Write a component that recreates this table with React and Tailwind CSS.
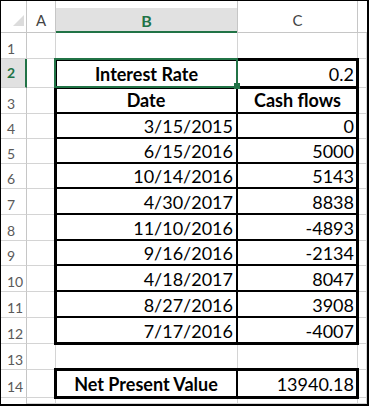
import React from "react";

const ROWS = ["row-start-1","row-start-2","row-start-3","row-start-4","row-start-5","row-start-6","row-start-7","row-start-8","row-start-9","row-start-10","row-start-11","row-start-12","row-start-13","row-start-14","row-start-15","row-start-16"];
const COLS = ["col-start-1","col-start-2","col-start-3","col-start-4","col-start-5"];

const data = [
  ["3/15/2015", "0"],
  ["6/15/2016", "5000"],
  ["10/14/2016", "5143"],
  ["4/30/2017", "8838"],
  ["11/10/2016", "-4893"],
  ["9/16/2016", "-2134"],
  ["4/18/2017", "8047"],
  ["8/27/2016", "3908"],
  ["7/17/2016", "-4007"],
];

const GRID = "border-r border-b border-[#d4d4d4]";

function cellContent(r, c) {
  if (r === 2 && c === 2) return { text: "Interest Rate", bold: true, align: "center", pb: "pb-[4px]" };
  if (r === 2 && c === 3) return { text: "0.2", align: "right", pb: "pb-[4px]" };
  if (r === 3 && c === 2) return { text: "Date", bold: true, align: "center", pb: "pb-[3px]" };
  if (r === 3 && c === 3) return { text: "Cash flows", bold: true, align: "center", pb: "pb-[3px]" };
  if (r >= 4 && r <= 12 && (c === 2 || c === 3)) {
    return { text: data[r - 4][c - 2], align: "right", pb: r === 12 ? "pb-[3px]" : "pb-[2px]" };
  }
  if (r === 14 && c === 2) return { text: "Net Present Value", bold: true, align: "center", pb: "pb-[4px]" };
  if (r === 14 && c === 3) return { text: "13940.18", align: "right", pb: "pb-[4px]" };
  return null;
}

function cellBorder(r, c) {
  const inBox = (r >= 3 && r <= 12) || r === 14;
  let cls = "";
  if (c === 2 && inBox) cls += " border-r-2 border-r-black border-b border-b-[#d4d4d4]";
  else cls += " " + GRID;
  if (r >= 3 && r <= 11 && (c === 2 || c === 3)) cls += " border-b-2 border-b-black";
  return cls;
}

export default function App() {
  const cells = [];

  cells.push(
    <div key="corner" className={`${ROWS[0]} ${COLS[0]} flex items-end justify-end pr-[2px] pb-[6px] border-r border-b border-[#c6c6c6]`}>
      <svg width="11" height="11" viewBox="0 0 11 11">
        <polygon points="11,0 11,11 0,11" fill="#dcdcdc" />
      </svg>
    </div>
  );
  cells.push(
    <div key="hA" className={`${ROWS[0]} ${COLS[1]} flex items-end justify-center pb-[4px] border-r border-b border-[#c6c6c6] text-[15px] leading-none text-[#444]`}>A</div>
  );
  cells.push(
    <div key="hB" className={`${ROWS[0]} ${COLS[2]} flex flex-col pt-[7px] border-r border-[#c6c6c6]`}>
      <div className="flex-1 flex items-end justify-center pb-[2px] bg-[#e1e1e1] border-b-2 border-[#217346] text-[16px] leading-none font-bold text-[#217346]">B</div>
    </div>
  );
  cells.push(
    <div key="hC" className={`${ROWS[0]} ${COLS[3]} flex items-end justify-center pb-[4px] border-r border-b border-[#c6c6c6] text-[15px] leading-none text-[#444]`}>C</div>
  );
  cells.push(<div key="hD" className={`${ROWS[0]} ${COLS[4]} border-b border-[#c6c6c6]`} />);

  for (let r = 1; r <= 15; r++) {
    const R = ROWS[r];
    const sel = r === 2;
    cells.push(
      <div
        key={`rh${r}`}
        className={`${R} ${COLS[0]} flex items-center pl-[6px] text-[14px] leading-none border-b border-[#d4d4d4] ${
          sel
            ? "bg-[#e1e1e1] border-r-2 border-r-[#217346] text-[#217346] font-bold"
            : "border-r border-r-[#c6c6c6] text-[#5a5a5a] pt-[6px]"
        }`}
      >
        {r <= 14 ? r : ""}
      </div>
    );
    for (let c = 1; c <= 4; c++) {
      const content = r <= 14 ? cellContent(r, c) : null;
      const border = r <= 14 ? cellBorder(r, c) : GRID;
      let inner = null;
      let layout = "";
      if (content) {
        layout = `flex items-end ${content.align === "center" ? "justify-center" : "justify-end pr-[3px]"} ${content.pb} text-[18px] leading-none text-black ${content.bold ? "font-bold" : ""}`;
        inner = content.text;
      }
      cells.push(
        <div key={`c${r}-${c}`} className={`${R} ${COLS[c]} ${border} ${layout}`}>
          {inner}
        </div>
      );
    }
  }

  return (
    <div className="w-[370px] h-[407px] bg-white font-['Lato',sans-serif]">
      <div className="w-[369px] h-[406px] border-l border-t border-r-2 border-b-2 border-black overflow-hidden">
        <div className="grid grid-cols-[26px_29px_182px_120px_9px] grid-rows-[32px_26px_29px_26px_25px_25px_25px_26px_26px_25px_26px_26px_26px_26px_28px_6px]">
          {cells}
          <div className="row-start-3 row-end-4 col-start-3 col-end-5 -ml-[2px] -mr-[1px] -mt-[1px] -mb-[1px] border-[3px] border-black pointer-events-none" />
          <div className="row-start-4 row-end-14 col-start-3 col-end-5 -ml-[2px] -mr-[1px] -mt-[2px] -mb-[1px] border-[3px] border-black pointer-events-none" />
          <div className="row-start-15 row-end-16 col-start-3 col-end-5 -ml-[2px] -mr-[1px] -mt-[2px] -mb-[1px] border-[3px] border-black pointer-events-none" />
          <div className="relative row-start-3 row-end-4 col-start-3 col-end-4 -ml-[2px] -mt-[1px] border-2 border-[#217346] pointer-events-none">
            <div className="absolute right-[-4px] bottom-[-3px] w-[6px] h-[6px] bg-[#217346]" />
          </div>
        </div>
      </div>
    </div>
  );
}
